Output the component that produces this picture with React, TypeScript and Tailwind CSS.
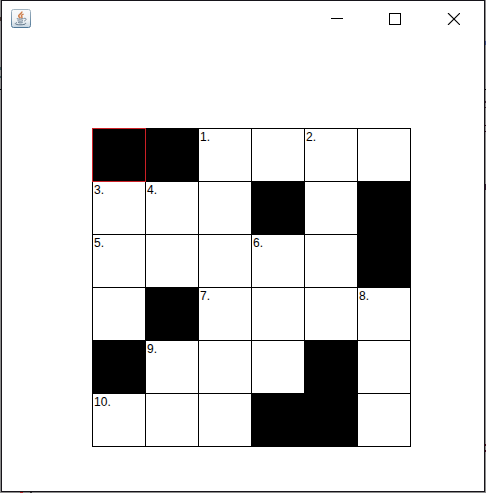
import React from "react";

// "#" is a blocked square, "." an open one; anything else is the clue number.
const rows: string[][] = [
  ["#", "#", "1", ".", "2", "."],
  ["3", "4", ".", "#", ".", "#"],
  ["5", ".", ".", "6", ".", "#"],
  [".", "#", "7", ".", ".", "8"],
  ["#", "9", ".", ".", "#", "."],
  ["10", ".", ".", "#", "#", "."],
];

function JavaIcon() {
  return (
    <svg width="20" height="20" viewBox="0 0 20 20" fill="none">
      <defs>
        <linearGradient id="face" x1="0" y1="0" x2="0" y2="1">
          <stop offset="0" stopColor="#f8fafb" />
          <stop offset="0.6" stopColor="#f0f3f5" />
          <stop offset="1" stopColor="#c4d3df" />
        </linearGradient>
        <linearGradient id="rim" x1="0" y1="0" x2="0" y2="1">
          <stop offset="0" stopColor="#a3b5c2" />
          <stop offset="1" stopColor="#4f7797" />
        </linearGradient>
      </defs>
      <rect x="0.5" y="0.5" width="19" height="18" rx="2" fill="url(#face)" stroke="url(#rim)" />
      <path d="M10.8 2.4C11.6 4.8 6.6 5.5 7.8 7.5C8.2 8.1 9 8.5 9.2 9.2" stroke="#cf7f4c" strokeWidth="1.6" />
      <path d="M12.6 5.2C9.8 6 10.2 7 10.9 7.8C11.3 8.3 10.8 8.8 10.3 9.2" stroke="#cf7f4c" strokeWidth="1.4" />
      <path d="M5.8 9.7C7.5 10.3 10.8 10.2 12.6 9.6M6.6 11.7C8.2 12.3 10.5 12.3 12 11.7M7.2 13.4C8.6 14 10.3 13.9 11.6 13.4" stroke="#64798c" strokeWidth="1" />
      <path d="M13 9.4C16 8.8 15.6 11.4 13.2 12" stroke="#64798c" strokeWidth="0.9" />
      <path d="M6 13.6C2.5 14.8 5 15.8 9 15.8C13 15.8 16 14.9 14 13.9" stroke="#64798c" strokeWidth="1" />
    </svg>
  );
}

function TitleBar() {
  return (
    <header className="flex h-[35px] items-start justify-between pl-[9px] pr-[24px]">
      <div className="pt-2">
        <JavaIcon />
      </div>
      <div className="flex gap-[46px] pt-3">
        <svg width="13" height="12" viewBox="0 0 13 12" shapeRendering="crispEdges">
          <path d="M1 5h12v1H1z" fill="#000" />
        </svg>
        <svg width="12" height="12" viewBox="0 0 12 12" shapeRendering="crispEdges">
          <rect x="0.5" y="0.5" width="11" height="11" fill="none" stroke="#000" />
        </svg>
        <svg width="13" height="12" viewBox="0 0 13 12">
          <path d="M1 0L13 12M13 0L1 12" stroke="#000" strokeWidth="1.1" />
        </svg>
      </div>
    </header>
  );
}

function Cell({ value, selected }: { value: string; selected: boolean }) {
  const blocked = value === "#";
  return (
    <div
      className={
        "relative size-[53px] border-r border-b pl-px pt-px text-[12px] leading-[14px] tracking-[0.1px] text-black " +
        (selected ? "border-[#cc2026] " : "border-black ") +
        (blocked ? "bg-black" : "bg-white")
      }
    >
      {!blocked && value !== "." ? value + "." : null}
      {selected && <div className="absolute -top-px -left-px z-10 size-[54px] border border-[#cc2026]" />}
    </div>
  );
}

// Slivers of the desktop that show past the window's edges.
function LeftSliver() {
  return (
    <div className="flex w-px flex-col">
      <i className="mt-[17px] h-[4px] bg-[#40302c]" />
      <i className="mt-[46px] h-[3px] bg-[#3c5458]" />
      <i className="mt-[6px] h-[2px] bg-[#3c5458]" />
      <i className="mt-[11px] h-px bg-black" />
    </div>
  );
}

function RightSliver() {
  return (
    <div className="flex w-px flex-col">
      <i className="mt-[41px] h-[4px] bg-[#3a4a80]" />
      <i className="mt-[44px] h-px bg-black" />
      <i className="mt-[11px] h-[2px] bg-[#3c2430]" />
      <i className="mt-[4px] h-px bg-[#3c2430]" />
      <i className="mt-[17px] h-px bg-[#300818]" />
      <i className="mt-[5px] h-px bg-[#300818]" />
      <i className="mt-[52px] h-[6px] bg-[#30182c]" />
      <i className="mt-[254px] h-[2px] bg-[#400818]" />
      <i className="mt-[4px] h-[2px] bg-[#400818]" />
    </div>
  );
}

export default function App() {
  return (
    <div className="flex h-[493px] w-[486px] flex-col bg-[#8c8c8c] font-['Liberation_Sans',Arial,sans-serif]">
      <div className="flex h-[492px]">
        <LeftSliver />
        <div className="w-[484px] border border-[#16141a] bg-white">
          <TitleBar />
          <main className="pt-[92px] pl-[90px]">
            <div className="grid w-[319px] grid-cols-6 border-t border-l border-black">
              {rows.flatMap((row, r) =>
                row.map((value, c) => <Cell key={`${r}-${c}`} value={value} selected={r === 0 && c === 0} />)
              )}
            </div>
          </main>
        </div>
        <RightSliver />
      </div>
      <div className="flex h-px gap-[7px] pl-[20px]">
        <i className="w-[3px] bg-[#b02020]" />
        <i className="w-[2px] bg-[#303030]" />
      </div>
    </div>
  );
}
